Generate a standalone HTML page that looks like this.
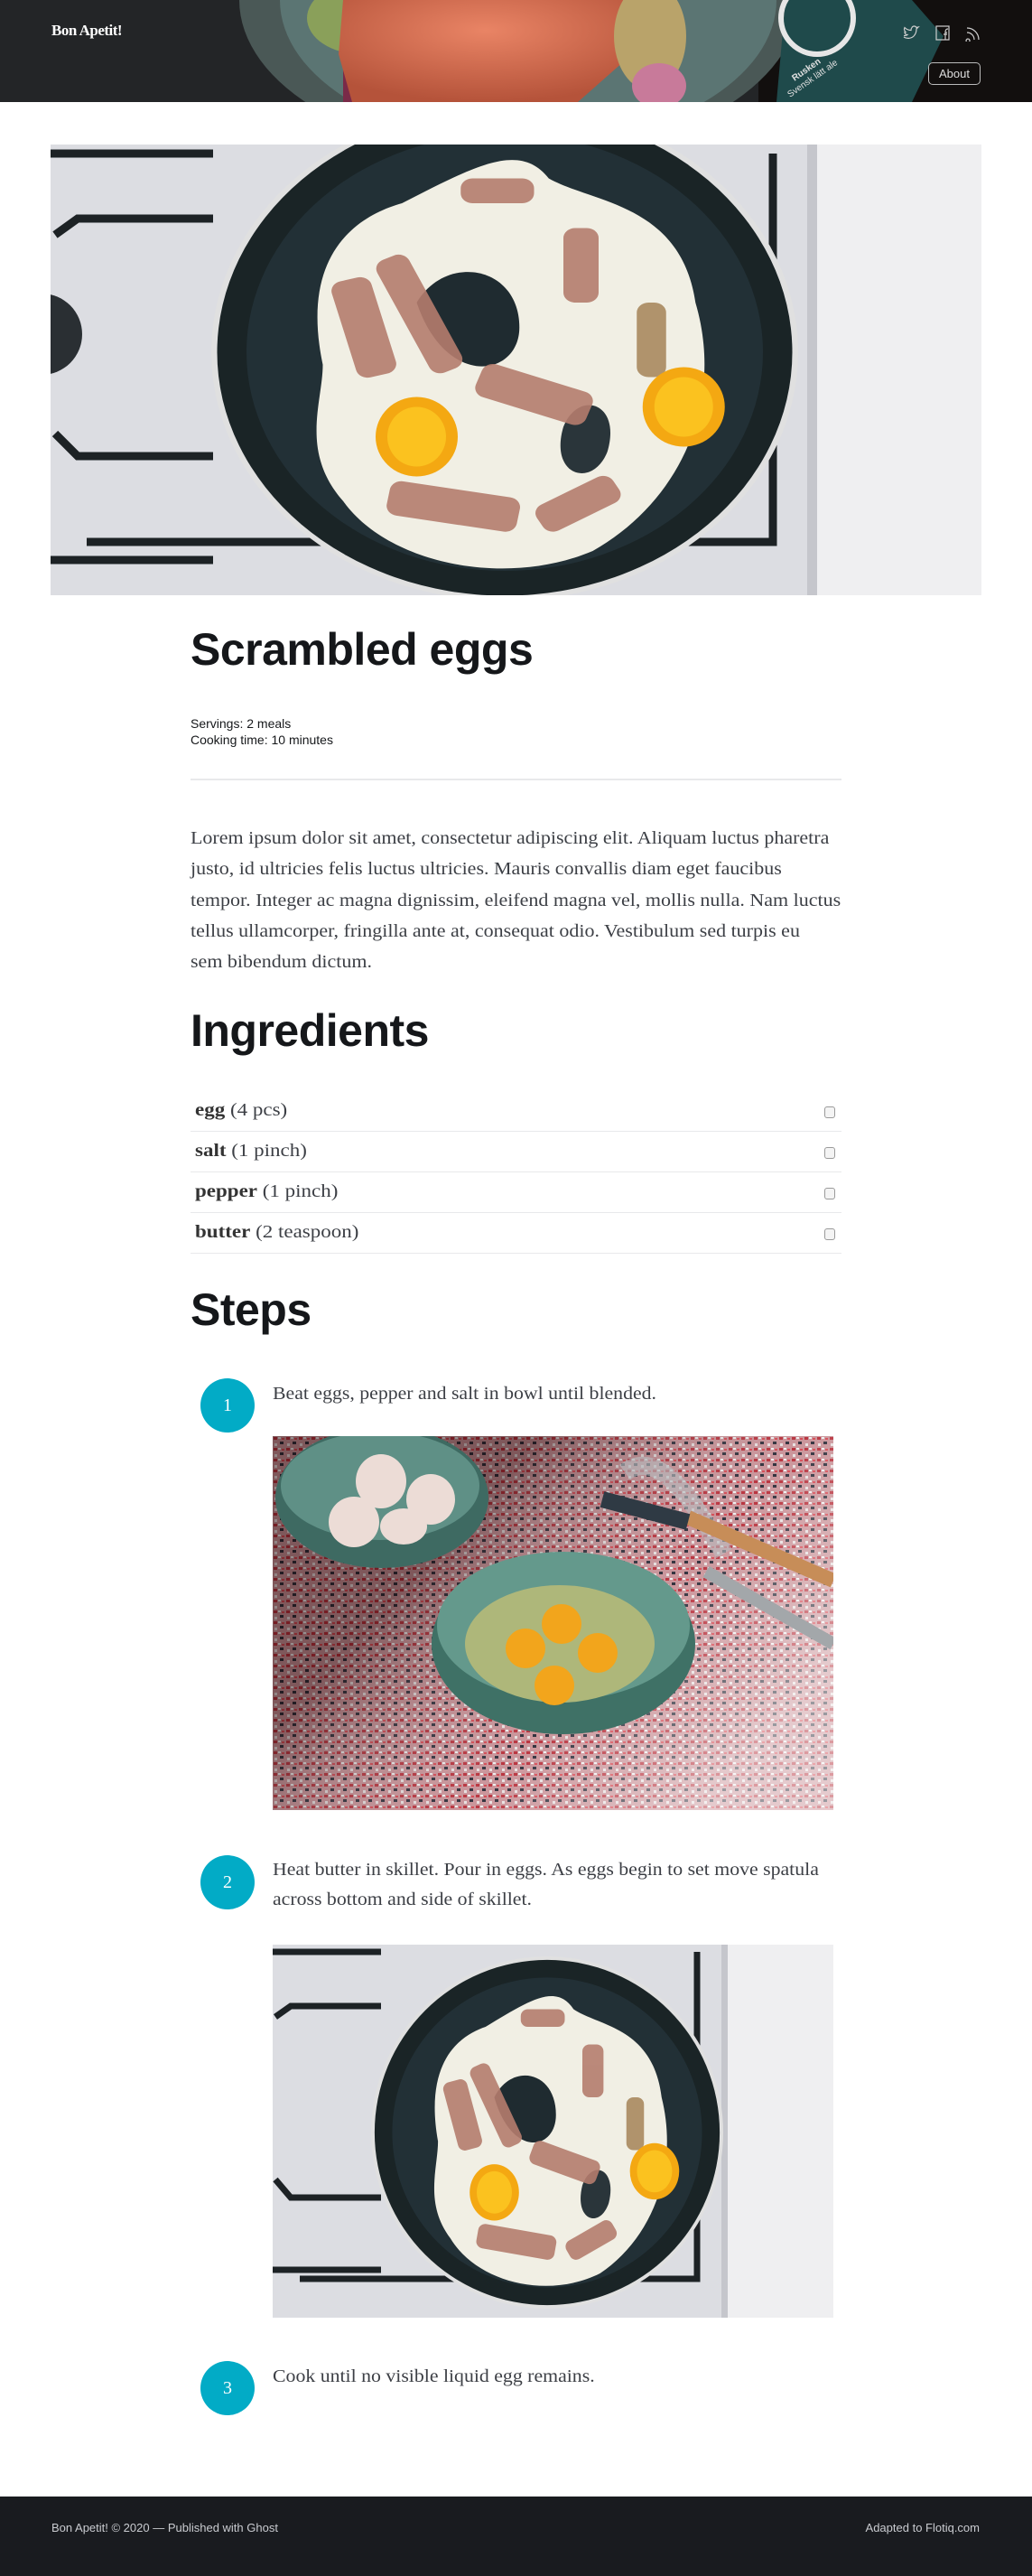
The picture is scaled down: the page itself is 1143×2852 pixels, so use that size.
<!DOCTYPE html>
<html><head><meta charset="utf-8"><style>
*{margin:0;padding:0;box-sizing:border-box}
body{width:1143px;height:2852px;background:#fff;position:relative;overflow:hidden;font-family:"Liberation Sans",sans-serif;color:#15171a}
.abs{position:absolute}
h1,h2{position:absolute;left:211px;font-family:"Liberation Sans",sans-serif;font-weight:700;color:#15171a;letter-spacing:-0.5px}
.serif{font-family:"Liberation Serif",serif;color:#3c3f45}
.row{position:absolute;left:211px;width:721px;height:45px;border-bottom:1px solid #e8e9eb;font-size:20px}
.row span{position:absolute;left:5px;top:10px;transform:scaleX(1.15);transform-origin:left;white-space:nowrap}
.row b{color:#333}
.cb{position:absolute;left:702px;top:17px;width:12px;height:13px;border:1px solid #9a9a9a;border-radius:3px;background:#f4f4f4}
.circ{position:absolute;left:222px;width:60px;height:60px;border-radius:50%;background:#02abc6;color:#fff;font-family:"Liberation Serif",serif;font-size:20px;text-align:center;line-height:60px}
.st{position:absolute;left:302px;font-size:20px;line-height:33px;width:640px;white-space:nowrap;transform:scaleX(1.09);transform-origin:left}
</style></head><body>

<svg class="abs" style="left:0;top:0" width="1143" height="113" viewBox="0 0 1143 113">
<defs>
<radialGradient id="sal" cx="0.5" cy="0.3" r="0.7"><stop offset="0" stop-color="#e98465"/><stop offset="1" stop-color="#b5533a"/></radialGradient>
</defs>
<rect width="1143" height="113" fill="#232527"/>
<rect x="840" width="303" height="113" fill="#120f0e"/>
<ellipse cx="575" cy="0" rx="310" ry="175" fill="#4a5856"/>
<ellipse cx="585" cy="0" rx="275" ry="160" fill="#5b7573"/>
<rect x="380" y="0" width="220" height="113" fill="#7a2a48"/>
<ellipse cx="400" cy="20" rx="60" ry="40" fill="#8aa05a"/>
<path d="M380 0 L690 0 L700 60 L640 113 L390 113 L375 60 Z" fill="url(#sal)"/>
<ellipse cx="720" cy="40" rx="40" ry="60" fill="#b9a36a"/>
<ellipse cx="730" cy="95" rx="30" ry="25" fill="#c87a9a"/>
<path d="M870 0 L1010 0 L1045 40 L1010 113 L860 113 Z" fill="#1f4a4b"/>
<circle cx="905" cy="20" r="40" fill="none" stroke="#e6e6e6" stroke-width="6"/>
<text x="880" y="90" fill="#e0e0e0" font-size="10" font-weight="700" font-family="Liberation Sans" transform="rotate(-35 880 90)">Rusken</text>
<text x="875" y="108" fill="#e0e0e0" font-size="10" font-family="Liberation Sans" transform="rotate(-35 875 108)">Svensk lätt ale</text>
</svg>
<div class="abs" style="left:57px;top:24px;font-family:'Liberation Serif',serif;font-weight:700;font-size:17px;color:#fff;letter-spacing:-0.5px">Bon Apetit!</div>
<svg class="abs" style="left:999px;top:28px" width="95" height="18" viewBox="0 0 95 18" fill="none" stroke="#cfcfcf" stroke-width="1.2">
<path d="M2 13c3 2 8 2 11-1 2-2 3-5 3-8l2-2-2 .5c-1-2-4-2-5 0-1 1-1 2-1 3-3 0-5-1-7-3-1 2 0 4 1 5H3c0 2 1 3 3 3-1 1-3 1-4 1"/>
<rect x="38" y="1" width="14" height="15"/><path d="M48 16V8h2M46 10h4M48 8c0-3 1-4 3-4"/>
<path d="M73 15a2 2 0 1 0 .1 0M72 8a8 8 0 0 1 8 8M72 3a13 13 0 0 1 13 13"/>
</svg>
<div class="abs" style="left:1028px;top:69px;width:58px;height:25px;border:1px solid #bbb;border-radius:5px;color:#ddd;font-size:13px;text-align:center;line-height:23px">About</div>

<svg width="0" height="0" style="position:absolute">
<defs>
<g id="pan">
<circle r="100" fill="#e0e0e0"/>
<circle r="98" fill="#1a2426"/>
<circle r="88" fill="#223036"/>
<path d="M-62 5 C-70 -40 -50 -55 -35 -60 C-10 -75 5 -85 15 -70 C30 -60 60 -60 65 -20 C75 20 60 60 30 80 C0 95 -40 85 -55 60 C-70 40 -62 20 -62 5Z" fill="#f1efe4"/>
<path d="M-30 -20 C-20 -40 5 -35 5 -10 C5 10 -20 15 -30 -20Z" fill="#1f2b30"/>
<path d="M20 30 C25 15 40 20 35 40 C30 55 15 50 20 30Z" fill="#2a353a"/>
<g fill="#b57d6e" opacity="0.9">
<rect x="-55" y="-30" width="14" height="40" rx="4" transform="rotate(-15 -48 -10)"/>
<rect x="-35" y="-40" width="12" height="50" rx="4" transform="rotate(-25 -30 -15)"/>
<rect x="-10" y="10" width="40" height="14" rx="4" transform="rotate(20 10 17)"/>
<rect x="20" y="-50" width="12" height="30" rx="4"/>
<rect x="-40" y="55" width="45" height="14" rx="4" transform="rotate(10 -18 62)"/>
<rect x="10" y="55" width="30" height="12" rx="4" transform="rotate(-30 25 61)"/>
<rect x="45" y="-20" width="10" height="30" rx="4" fill="#a98a60"/>
<rect x="-15" y="-70" width="25" height="10" rx="4"/>
</g>
<ellipse cx="-30" cy="34" rx="14" ry="16" fill="#f4a812"/>
<ellipse cx="-30" cy="34" rx="10" ry="12" fill="#fbc21f"/>
<ellipse cx="61" cy="22" rx="14" ry="16" fill="#f4a812"/>
<ellipse cx="61" cy="22" rx="10" ry="12" fill="#fbc21f"/>
</g>
</defs>
</svg>

<svg class="abs" style="left:56px;top:160px" width="1031" height="499" viewBox="0 0 1031 499">
<rect width="1031" height="499" fill="#dcdde2"/>
<rect x="849" width="182" height="499" fill="#efeff1"/>
<rect x="838" width="11" height="499" fill="#c5c6cc"/>
<path d="M0 10 H180 M0 460 H180 M5 100 L30 82 H180 M5 320 L30 345 H180 M800 10 V440 H40" stroke="#1d2225" stroke-width="9" fill="none"/>
<circle cx="-10" cy="210" r="45" fill="#2a2f33"/>
<g transform="translate(503 230) scale(3.25 2.75)"><use href="#pan"/></g>
</svg>

<h1 style="top:690px;font-size:50px">Scrambled eggs</h1>
<div class="abs" style="left:211px;top:792px;font-size:14px;line-height:18px;color:#15171a">Servings: 2 meals<br>Cooking time: 10 minutes</div>
<div class="abs" style="left:211px;top:862px;width:721px;height:2px;background:#e8e9eb"></div>
<p class="abs serif" style="left:211px;top:912px;width:700px;font-size:19.5px;line-height:34.3px;white-space:nowrap;transform:scaleX(1.128);transform-origin:left">Lorem ipsum dolor sit amet, consectetur adipiscing elit. Aliquam luctus pharetra<br>justo, id ultricies felis luctus ultricies. Mauris convallis diam eget faucibus<br>tempor. Integer ac magna dignissim, eleifend magna vel, mollis nulla. Nam luctus<br>tellus ullamcorper, fringilla ante at, consequat odio. Vestibulum sed turpis eu<br>sem bibendum dictum.</p>

<h2 style="top:1112px;font-size:50px">Ingredients</h2>
<div class="row serif" style="top:1208px"><span><b>egg</b> (4 pcs)</span><i class="cb"></i></div>
<div class="row serif" style="top:1253px"><span><b>salt</b> (1 pinch)</span><i class="cb"></i></div>
<div class="row serif" style="top:1298px"><span><b>pepper</b> (1 pinch)</span><i class="cb"></i></div>
<div class="row serif" style="top:1343px"><span><b>butter</b> (2 teaspoon)</span><i class="cb"></i></div>

<h2 style="top:1421px;font-size:50px">Steps</h2>
<div class="circ" style="top:1526px">1</div>
<div class="st serif" style="top:1527px">Beat eggs, pepper and salt in bowl until blended.</div>

<svg class="abs" style="left:302px;top:1590px" width="621" height="414" viewBox="0 0 621 414">
<defs>
<pattern id="terr" width="14" height="12" patternUnits="userSpaceOnUse">
<rect width="14" height="12" fill="#c58a90"/>
<rect x="1" y="1" width="4" height="3" fill="#b2202c"/><rect x="8" y="6" width="4" height="3" fill="#1c1d2a"/>
<rect x="6" y="1" width="3" height="2" fill="#eee"/><rect x="2" y="8" width="3" height="3" fill="#e6dede"/><rect x="10" y="2" width="3" height="2" fill="#d23a45"/>
</pattern>
<linearGradient id="lite" x1="0" y1="0" x2="1" y2="0.6"><stop offset="0.35" stop-color="#2a1a1a" stop-opacity="0.45"/><stop offset="0.7" stop-color="#fff" stop-opacity="0.1"/><stop offset="1" stop-color="#fff" stop-opacity="0.55"/></linearGradient>
</defs>
<rect width="621" height="414" fill="url(#terr)"/>
<rect width="621" height="414" fill="url(#lite)"/>
<ellipse cx="121" cy="68" rx="118" ry="78" fill="#3e6a62"/>
<ellipse cx="119" cy="55" rx="110" ry="60" fill="#5f9086"/>
<g fill="#ecdcd6"><ellipse cx="90" cy="95" rx="28" ry="28"/><ellipse cx="120" cy="50" rx="28" ry="30"/><ellipse cx="175" cy="70" rx="27" ry="28"/><ellipse cx="145" cy="100" rx="26" ry="20"/></g>
<ellipse cx="322" cy="230" rx="146" ry="100" fill="#3f7166"/>
<ellipse cx="322" cy="210" rx="140" ry="82" fill="#64998c"/>
<ellipse cx="318" cy="230" rx="105" ry="65" fill="#aeb77a"/>
<g fill="#f2a51c"><circle cx="280" cy="235" r="22"/><circle cx="320" cy="208" r="22"/><circle cx="360" cy="240" r="22"/><circle cx="312" cy="276" r="22"/></g>
<path d="M390 40 C430 10 470 80 500 130" stroke="#b8bcc0" stroke-width="20" fill="none" opacity="0.6"/>
<path d="M480 150 L621 230" stroke="#a3a7aa" stroke-width="14"/>
<path d="M460 90 L621 160" stroke="#c78d58" stroke-width="16"/>
<path d="M365 70 L460 95" stroke="#2f3a44" stroke-width="18"/>
</svg>

<div class="circ" style="top:2054px">2</div>
<div class="st serif" style="top:2054px">Heat butter in skillet. Pour in eggs. As eggs begin to set move spatula<br>across bottom and side of skillet.</div>

<svg class="abs" style="left:302px;top:2153px" width="621" height="413" viewBox="0 0 621 413">
<rect width="621" height="413" fill="#dcdde2"/>
<rect x="504" width="117" height="413" fill="#efeff1"/>
<rect x="497" width="7" height="413" fill="#c5c6cc"/>
<path d="M0 8 H120 M0 360 H120 M3 80 L20 68 H120 M3 260 L20 280 H120 M470 8 V370 H30" stroke="#1d2225" stroke-width="7" fill="none"/>
<g transform="translate(304 208) scale(1.95 1.95)"><use href="#pan"/></g>
</svg>

<div class="circ" style="top:2614px">3</div>
<div class="st serif" style="top:2615px">Cook until no visible liquid egg remains.</div>

<div class="abs" style="left:0;top:2764px;width:1143px;height:88px;background:#191b1f"></div>
<div class="abs" style="left:57px;top:2791px;font-size:13px;color:#c9cbd0">Bon Apetit! © 2020 — Published with Ghost</div>
<div class="abs" style="right:58px;top:2791px;font-size:13px;color:#c9cbd0">Adapted to Flotiq.com</div>
</body></html>
